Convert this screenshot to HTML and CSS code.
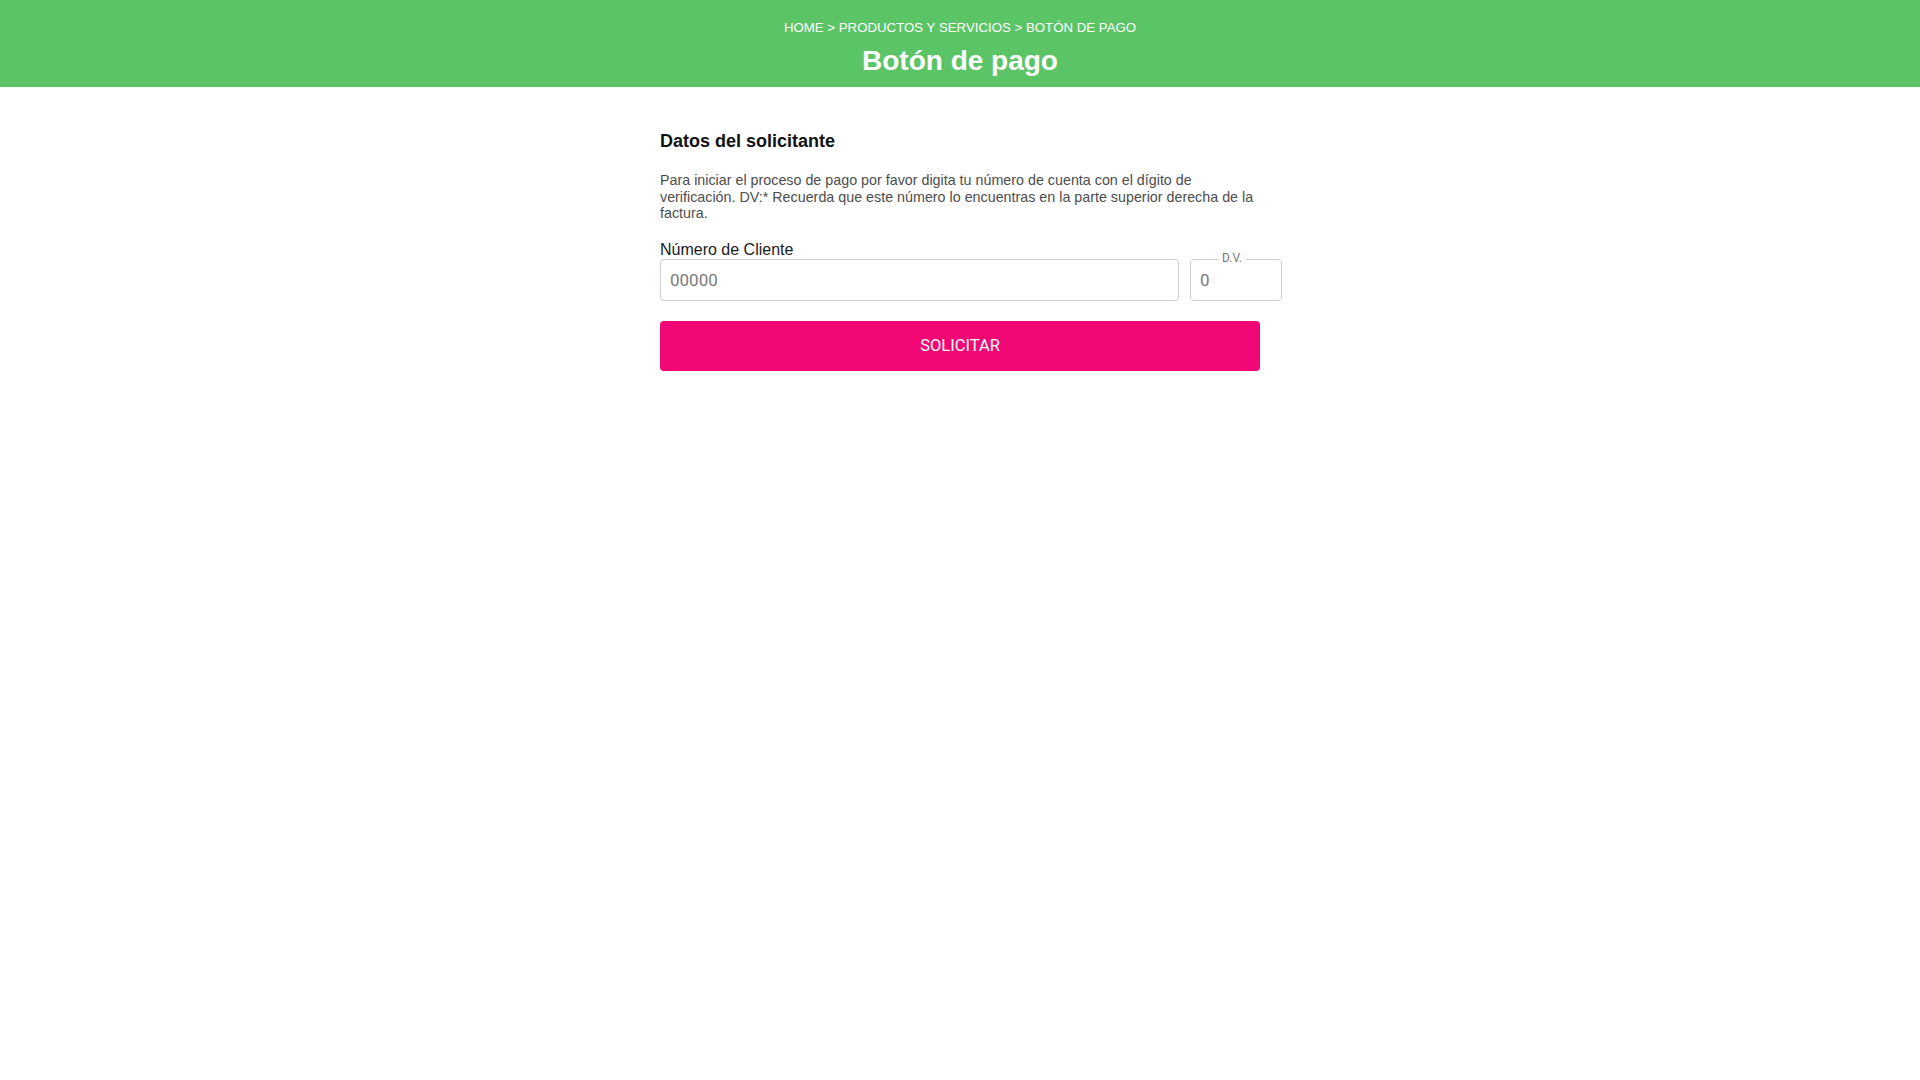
FILE: index.html
```html
<!DOCTYPE html>
<html lang="es">
<head>
<meta charset="utf-8">
<title>Botón de pago</title>
<link rel="stylesheet" href="styles.css">
</head>
<body>
<header class="hero">
  <nav class="crumbs">HOME &gt; PRODUCTOS Y SERVICIOS &gt; BOTÓN DE PAGO</nav>
  <h1 class="hero-title">Botón de pago</h1>
</header>
<main class="content">
  <h2 class="section-title">Datos del solicitante</h2>
  <p class="intro">Para iniciar el proceso de pago por favor digita tu número de cuenta con el dígito de verificación. DV:* Recuerda que este número lo encuentras en la parte superior derecha de la factura.</p>
  <div class="fields">
    <div class="field field-main">
      <label class="field-label" for="cliente">Número de Cliente</label>
      <input class="input input-main" id="cliente" type="text" placeholder="00000">
    </div>
    <div class="field field-dv">
      <span class="dv-label">D.V.</span>
      <input class="input input-dv" type="text" placeholder="0">
    </div>
  </div>
  <button class="submit" type="button">SOLICITAR</button>
</main>
</body>
</html>
```
FILE: styles.css
```css
html, body {
  margin: 0;
  padding: 0;
  background: #ffffff;
}
body {
  font-family: "Liberation Sans", Arial, sans-serif;
  color: #222;
}
.hero {
  background: #5ac466;
  color: #ffffff;
  text-align: center;
  padding: 20px 0 10px;
}
.crumbs {
  font-size: 13.25px;
  line-height: 15px;
}
.hero-title {
  margin: 10px 0 0;
  font-size: 28px;
  line-height: 32px;
  font-weight: bold;
}
.content {
  width: 600px;
  margin: 0 auto;
  padding-top: 44px;
}
.section-title {
  margin: 0;
  font-size: 18px;
  line-height: 21px;
  font-weight: bold;
  color: #111;
}
.intro {
  margin: 20px 0 0;
  font-size: 14.3px;
  line-height: 16.5px;
  color: #4d4d4d;
}
.fields {
  margin-top: 19px;
  width: 622px;
  display: flex;
  align-items: flex-end;
  gap: 11px;
}
.field {
  display: flex;
  flex-direction: column;
}
.field-main {
  width: 519px;
}
.field-dv {
  width: 92px;
  position: relative;
}
.field-label {
  font-size: 16px;
  line-height: 18px;
  color: #1a1a1a;
}
.input {
  box-sizing: border-box;
  height: 42px;
  border: 1px solid #cfcfcf;
  border-radius: 4px;
  font-family: Roboto, "Liberation Sans", sans-serif;
  font-size: 17px;
  color: #333;
  background: #fff;
  outline: none;
  margin: 0;
}
.input::placeholder {
  color: #7a7a7a;
}
.input-main {
  width: 100%;
  padding: 0 9px;
}
.input-dv {
  width: 100%;
  padding: 0 9px;
}
.dv-label {
  position: absolute;
  top: -8px;
  left: 28px;
  padding: 0 4px;
  background: #fff;
  font-family: Roboto, "Liberation Sans", sans-serif;
  font-size: 12px;
  line-height: 14px;
  color: #777;
}
.submit {
  display: block;
  margin-top: 20px;
  width: 600px;
  height: 50px;
  border: 0;
  border-radius: 4px;
  background: #f20775;
  color: #ffffff;
  font-family: Roboto, "Liberation Sans", sans-serif;
  font-size: 16.5px;
  cursor: pointer;
}
```
